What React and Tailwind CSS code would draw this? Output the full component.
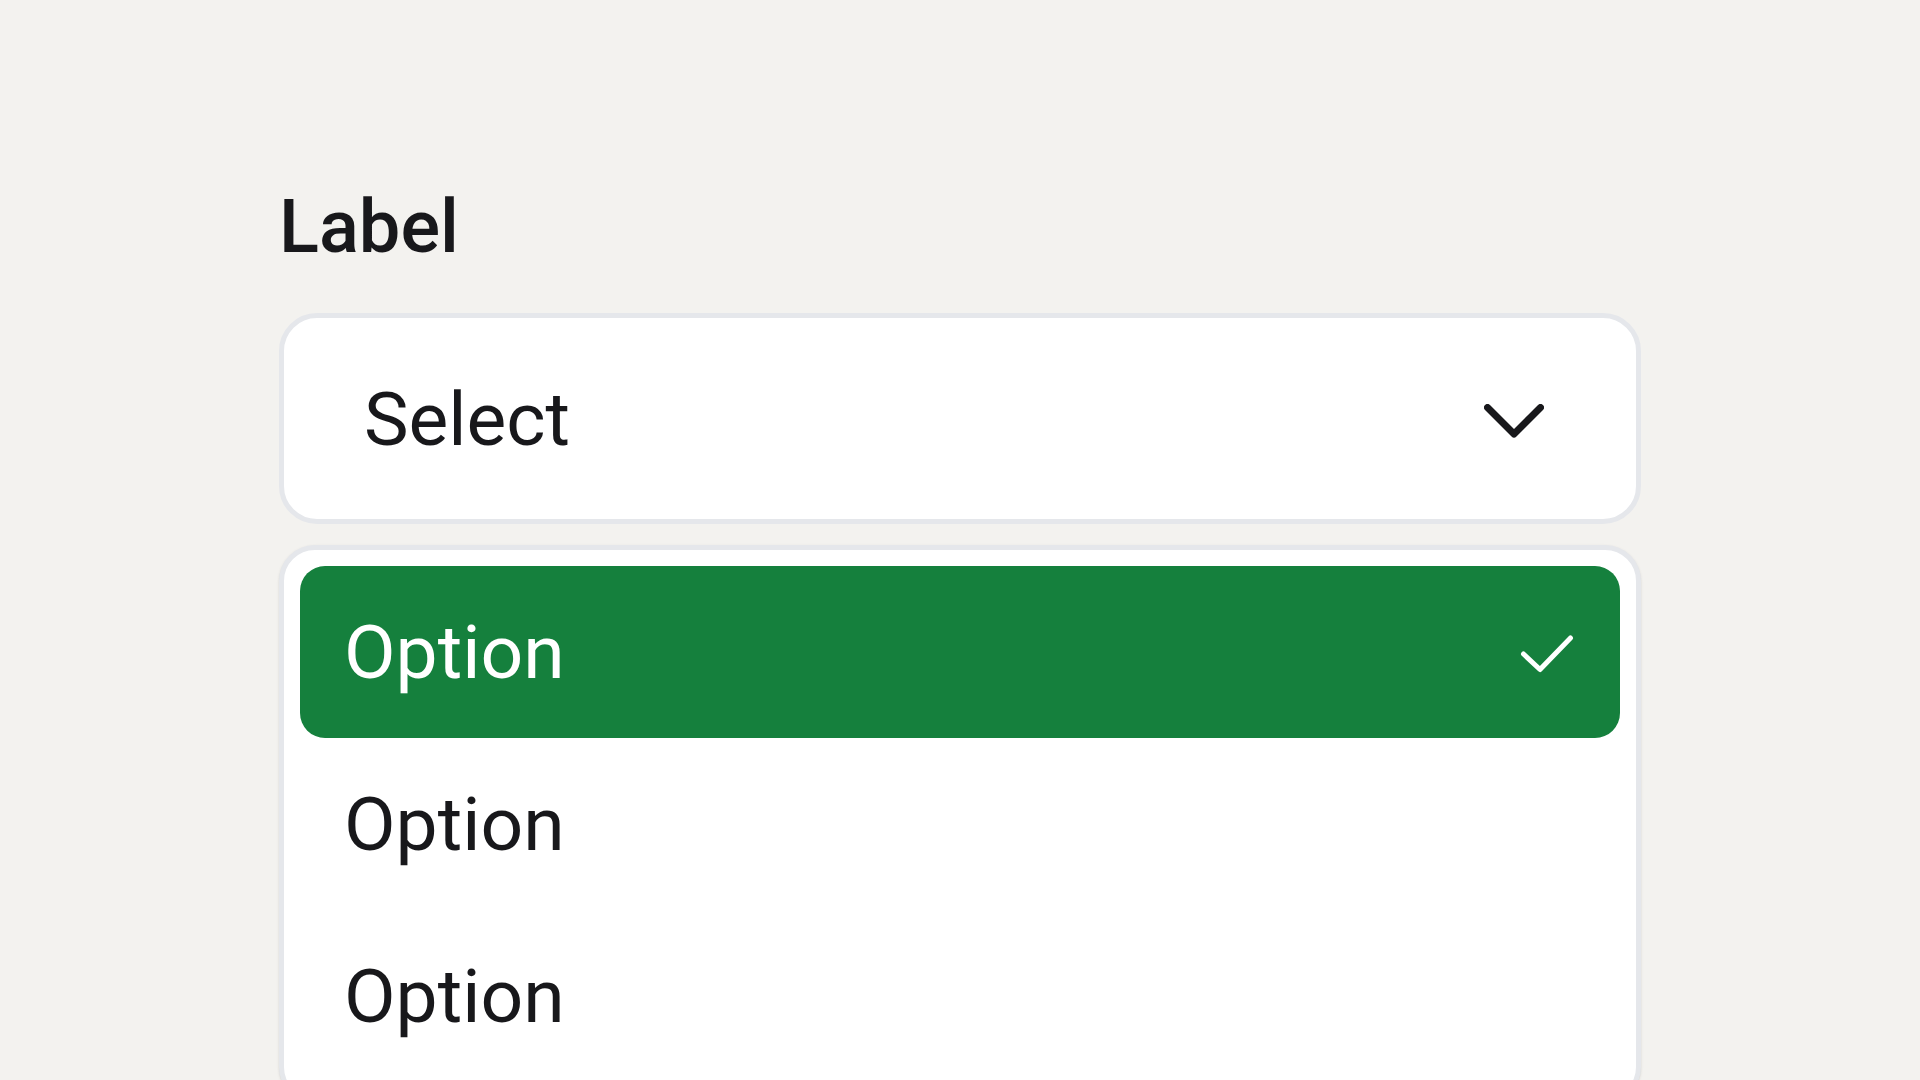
export default function App() {
  const options = ['Option', 'Option', 'Option'];
  return (
    <div
      className="min-h-screen w-full bg-[#f3f2ef] overflow-hidden pl-[279px] pt-[182px]"
      style={{ fontFamily: 'Roboto, "Noto Sans", sans-serif' }}
    >
      <div className="w-[1362px] flex flex-col">
        <label className="text-[74px] leading-[90px] font-medium text-[#18181b]">Label</label>

        <button className="mt-[41px] h-[211px] w-full flex items-center justify-between rounded-[38px] border-[5px] border-[#e5e7eb] bg-white pl-[80px] pr-[92px] text-left">
          <span className="text-[75px] leading-[90px] text-[#18181b]">Select</span>
          <svg width="60" height="34" viewBox="0 0 60 34" className="mt-[5px]" fill="none">
            <polyline
              points="3.5,3.5 30,30 56.5,3.5"
              stroke="#18181b"
              strokeWidth="7"
              strokeLinecap="round"
              strokeLinejoin="round"
            />
          </svg>
        </button>

        <ul className="mt-[21px] w-full rounded-[36px] border-[5px] border-[#e5e7eb] bg-white p-[16px] shadow-sm">
          {options.map((o, i) => (
            <li
              key={i}
              className={
                i === 0
                  ? 'h-[172px] flex items-center justify-between rounded-[25px] bg-[#15803d] pl-[44px] pr-[45px] text-white'
                  : 'h-[172px] flex items-center justify-between rounded-[25px] pl-[44px] pr-[45px] text-[#18181b]'
              }
            >
              <span className="text-[75px] leading-[90px]">{o}</span>
              {i === 0 && (
                <svg width="56" height="42" viewBox="0 0 56 42" className="mt-[4px]" fill="none">
                  <polyline
                    points="4.5,21 21,36.5 51.5,5"
                    stroke="white"
                    strokeWidth="5"
                    strokeLinecap="round"
                    strokeLinejoin="round"
                  />
                </svg>
              )}
            </li>
          ))}
        </ul>
      </div>
    </div>
  );
}
